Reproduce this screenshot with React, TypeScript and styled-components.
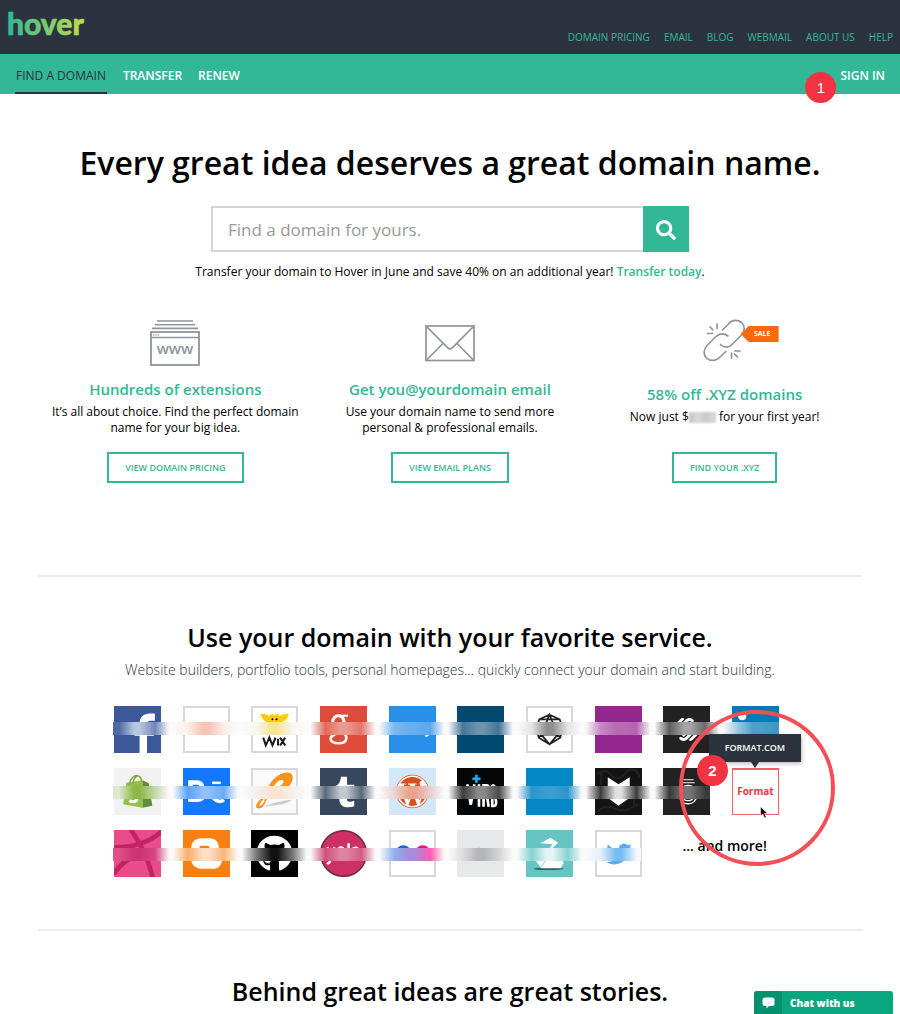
import React from "react";
import styled, { createGlobalStyle } from "styled-components";
import { FaSearch, FaGithub, FaTwitter, FaWordpress } from "react-icons/fa";
import { SiSquarespace } from "react-icons/si";

const green = "#32b896";
const dark = "#2b333e";
const red = "#f13343";
const rule = "#ebeded";

const GlobalStyle = createGlobalStyle`
  * { box-sizing: border-box; }
  body {
    margin: 0;
    background: #fff;
    color: #000;
    font-family: "Open Sans", "Noto Sans", sans-serif;
  }
  a { text-decoration: none; }
  h1, h2, h3, p { margin: 0; }
`;

const TopBar = styled.header`
  display: flex;
  justify-content: space-between;
  align-items: flex-end;
  height: 54px;
  padding: 0 7px 10px;
  background: ${dark};
`;

const Logo = styled.a`
  svg { display: block; overflow: visible; }
  text { font: 900 30px Lato, sans-serif; }
`;

const TopLinks = styled.nav`
  display: flex;
  gap: 14px;
`;

const TopLink = styled.a`
  font-size: 10px;
  line-height: 14px;
  color: ${green};
`;

const MainNav = styled.nav`
  display: flex;
  align-items: stretch;
  gap: 16px;
  height: 40px;
  padding: 0 15px;
  background: ${green};
`;

const NavLink = styled.a<{ $active?: boolean }>`
  position: relative;
  padding: 2px ${(p) => (p.$active ? 1 : 0)}px 0;
  font-size: 12px;
  line-height: 40px;
  font-weight: ${(p) => (p.$active ? 400 : 600)};
  color: ${(p) => (p.$active ? dark : "#fff")};
  box-shadow: ${(p) => (p.$active ? `inset 0 -2px ${dark}` : "none")};
`;

const SignIn = styled(NavLink)`
  margin-left: auto;
`;

const Marker = styled.span<{ $x: number; $y: number; $bold?: boolean }>`
  position: absolute;
  left: ${(p) => p.$x}px;
  top: ${(p) => p.$y}px;
  z-index: 4;
  width: 31px;
  height: 31px;
  border-radius: 50%;
  background: ${red};
  color: #fff;
  font: ${(p) => (p.$bold ? 700 : 400)} 15px/31px "Liberation Sans", sans-serif;
  text-align: center;
`;

const Main = styled.main`
  padding: 0 38px;
`;

const Hero = styled.section`
  display: flex;
  flex-direction: column;
  align-items: center;
  padding-top: 48px;
  text-align: center;
`;

const HeroTitle = styled.h1`
  font-size: 32px;
  line-height: 42px;
  font-weight: 600;
`;

const SearchForm = styled.form`
  display: flex;
  width: 58%;
  margin-top: 22px;
`;

const SearchInput = styled.input`
  flex: 1;
  min-width: 0;
  height: 46px;
  padding: 0 15px;
  border: 2px solid #d4d6d6;
  border-right: 0;
  border-radius: 0;
  outline: 0;
  background: #fff;
  font: 400 17px "Open Sans", sans-serif;
  &::placeholder { color: #999; opacity: 1; }
`;

const SearchButton = styled.button`
  display: grid;
  place-items: center;
  width: 46px;
  height: 46px;
  border: 0;
  padding: 2px 0 0;
  background: ${green};
  color: #fff;
  font-size: 20px;
`;

const Promo = styled.p`
  margin-top: 10px;
  font-size: 12px;
  line-height: 20px;
`;

const PromoLink = styled.a`
  color: ${green};
  font-weight: 600;
`;

const Features = styled.section`
  display: grid;
  grid-template-columns: repeat(3, 1fr);
  margin-top: 36px;
  padding-bottom: 92px;
  border-bottom: 2px solid ${rule};
`;

const Feature = styled.article`
  display: flex;
  flex-direction: column;
  align-items: center;
  height: 165px;
  text-align: center;
`;

const FeatureIcon = styled.div<{ $tall?: boolean }>`
  position: relative;
  width: 50px;
  height: ${(p) => (p.$tall ? 66 : 61)}px;
  padding-top: 2px;
  svg { display: block; }
`;

const FeatureTitle = styled.h3`
  font-size: 15px;
  line-height: 20px;
  font-weight: 600;
  color: ${green};
`;

const FeatureText = styled.p`
  margin-top: 5px;
  font-size: 12px;
  line-height: 16px;
`;

const Hidden = styled.span`
  display: inline-block;
  width: 27px;
  height: 11px;
  vertical-align: -2px;
  background: linear-gradient(90deg, #c4c4c4, #d9d9d9 30%, #cacaca 60%, #d9d9d9);
  filter: blur(1px);
`;

const OutlineButton = styled.button`
  margin-top: auto;
  height: 31px;
  padding: 0 16px;
  border: 2px solid ${green};
  background: #fff;
  color: ${green};
  font: 600 9px "Open Sans", sans-serif;
`;

const SaleTag = styled.span`
  position: absolute;
  left: 41px;
  top: 8px;
  width: 38px;
  height: 16px;
  padding-left: 5px;
  background: #f9690e;
  clip-path: polygon(0 50%, 8px 0, 100% 0, 100% 100%, 8px 100%);
  color: #fff;
  font-size: 7px;
  line-height: 16px;
  font-weight: 700;
`;

const Services = styled.section`
  padding: 43px 0 52px;
  border-bottom: 2px solid ${rule};
  text-align: center;
`;

const SectionTitle = styled.h2`
  font-size: 25px;
  line-height: 34px;
  font-weight: 600;
  text-align: center;
`;

const Subtitle = styled.p`
  margin-top: 6px;
  font-size: 14px;
  line-height: 20px;
  font-weight: 300;
  color: ${dark};
`;

const ServiceRows = styled.div`
  display: flex;
  flex-direction: column;
  gap: 15px;
  max-width: 672px;
  margin: 26px auto 0;
  padding-right: 7px;
`;

const ServiceRow = styled.div`
  position: relative;
  display: grid;
  grid-template-columns: repeat(10, 47px);
  justify-content: space-between;
`;

const SmudgeBar = styled.div<{ $top: number; $right: number; $stops: string }>`
  position: absolute;
  left: -1px;
  right: ${(p) => p.$right}px;
  top: ${(p) => p.$top}px;
  height: 13px;
  background: linear-gradient(90deg, ${(p) => p.$stops});
`;

const Tile = styled.a<{ $bg?: string; $line?: string }>`
  display: block;
  height: 47px;
  background: ${(p) => p.$bg ?? "#fff"};
  border: ${(p) => (p.$line ? `2px solid ${p.$line}` : "0")};
  overflow: hidden;
  > svg { display: block; width: 47px; height: 47px; margin: ${(p) => (p.$line ? "-2px" : "0")}; }
`;

const FormatCell = styled.div`
  position: relative;
  z-index: 3;
`;

const FormatTile = styled.a`
  display: block;
  height: 47px;
  border: 1px solid #f4606a;
  border-top-width: 2px;
  background: #fff;
  color: ${red};
  font: 700 10px/42px "Open Sans", sans-serif;
`;

const Tooltip = styled.span`
  position: absolute;
  left: -23px;
  top: -34px;
  width: 92px;
  background: ${dark};
  box-shadow: 1px 2px 4px rgba(0, 0, 0, 0.25);
  color: #fff;
  font-size: 9px;
  font-weight: 600;
  line-height: 28px;
  &::after {
    content: "";
    position: absolute;
    left: 42px;
    top: 28px;
    border: 4px solid transparent;
    border-top: 6px solid ${dark};
    border-bottom: 0;
  }
`;

const Ring = styled.span`
  position: absolute;
  left: -53px;
  top: -58px;
  z-index: 3;
  width: 156px;
  height: 156px;
  border: 4px solid #f44f56;
  border-radius: 50%;
  pointer-events: none;
`;

const Pointer = styled.svg`
  position: absolute;
  left: 28px;
  top: 38px;
  z-index: 3;
`;

const AndMore = styled.a`
  grid-column: 9 / 11;
  padding: 6px 0 0 7px;
  font-size: 14px;
  line-height: 20px;
  font-weight: 600;
  color: #000;
`;

const Stories = styled.section`
  padding: 43px 0 8px;
`;

const Chat = styled.button`
  position: fixed;
  right: 7px;
  bottom: 0;
  display: flex;
  align-items: center;
  width: 139px;
  height: 23px;
  padding: 0;
  border: 0;
  border-radius: 3px 3px 0 0;
  overflow: hidden;
  background: #0aa680;
  color: #fff;
  font: 800 10px "Open Sans", sans-serif;
`;

const ChatIcon = styled.span`
  display: grid;
  place-items: center;
  width: 28px;
  height: 23px;
  margin-right: 8px;
  background: #04926e;
`;

const grey = "#8f9499";

function BrowserIcon() {
  return (
    <svg width="50" height="46" viewBox="0 0 50 46" fill="none" stroke={grey}>
      <path d="M7 1H43M5 4.7H45M2 8.4H48" strokeWidth="1.6" />
      <rect x="1" y="12" width="48" height="33" strokeWidth="1.8" />
      <path d="M1 17.5H49" strokeWidth="1.4" />
      <path d="M3 14.8H9" strokeDasharray="1.3 1" strokeWidth="1.2" />
      <text x="25" y="34" textAnchor="middle" fill={grey} stroke="none" fontSize="15" fontWeight="600">
        www
      </text>
    </svg>
  );
}

function MailIcon() {
  return (
    <svg width="50" height="42" viewBox="0 0 50 42" fill="none" stroke={grey} strokeWidth="1.7">
      <rect x="1" y="6" width="48" height="34.500" />
      <path d="M1.500 6.500L23 28q2 1.600 4 0L48.500 6.500M1.500 40L18 23.500M48.500 40L32 23.500" />
    </svg>
  );
}

function ChainIcon() {
  return (
    <svg width="50" height="44" viewBox="0 0 50 44" fill="none" stroke={grey} strokeWidth="1.700" strokeLinecap="round" overflow="visible">
      <path d="M22.500 10L29 3.500C32-.5 38-.5 41.500 2.500C45 6 45 11 42 14.500L32.500 24C29 28 24 28 20.500 24.500" />
      <path d="M28 16C24.500 13 19.500 13 16 16.500L7 25.500C3 29.500 3.500 35 6.500 38C10 41.500 16 41 19 38L26 31.500" />
      <path d="M7.500 13.500H12.500M10 7L13 10M17 4V8.500M31.500 33V38M34.500 34L37.500 37M35 31H40" />
    </svg>
  );
}

function FacebookArt() {
  return (
    <svg viewBox="0 0 46 46">
      <path fill="#fff" d="M25 46V29h-5v-8h5v-4c0-6 4-9.700 10-9.700h5v7.200h-4c-3 0-3.700 1.200-3.700 4V21H40l-1 8h-6.700v17z" />
    </svg>
  );
}

function WixArt() {
  return (
    <svg viewBox="0 0 46 46">
      <path
        fill="#fc0"
        d="M9 7.500c4 .2 7 .5 9 2.500 1.500-2.500 3-3 5-.5 2.500-2.500 4-2 5 .5 2-2 5-2.300 9-2.500-1 5-4 7-7 8.500l2 8H14l2-7.500C13 14 10 12 9 7.500z"
      />
      <circle cx="21" cy="13" r="1" />
      <circle cx="25" cy="13" r="1" />
      <path fill="none" stroke="#1a1a1a" strokeWidth="2" d="M12 31l2.500 7.500L18 31l3 7.500L24 31M26.500 32v6.700M28.500 31l5 7.700M33.500 31l-5 7.700" />
    </svg>
  );
}

function GoogleArt() {
  return (
    <svg viewBox="0 0 46 46" fill="none" stroke="#fff">
      <ellipse cx="18" cy="15.500" rx="5.500" ry="6" strokeWidth="3" />
      <path d="M18 9.500h9.500" strokeWidth="2" />
      <path d="M20 25c8 3 8 11.500-2 11.500-9 0-10-7-3-8.500" strokeWidth="2.600" />
    </svg>
  );
}

function WeeblyArt() {
  return (
    <svg viewBox="0 0 46 46" fill="none" stroke="#fff" strokeWidth="2">
      <path d="M38.500 26c0 2.500-1 3.500-3 3" />
    </svg>
  );
}

function GlobeArt() {
  return (
    <svg viewBox="0 0 46 46" fill="none" stroke="#222" strokeWidth="1.700">
      <path d="M23 8.500l10 4.500 3 9-2.500 9L23 37.500 12.500 31 10 22l3-9zM23 8.500L15 28h16zM13 13l20 0M10 22l5 6 8 9.500L31 28l5-6M12.500 31l2.500-3M33.500 31L31 28" />
    </svg>
  );
}

function LinkedInArt() {
  return (
    <svg viewBox="0 0 46 46" fill="#fff">
      <circle cx="10" cy="10" r="4" />
      <path d="M7 18h6v10H7z" />
    </svg>
  );
}

function ShopifyArt() {
  return (
    <svg viewBox="0 0 46 46">
      <path fill="#95bf47" d="M12 14.500l16-2.500v27L9 35.500z" />
      <path fill="#5e8e3e" d="M28 12l6 3 3.500 22L28 39z" />
      <path fill="none" stroke="#7fab3c" strokeWidth="1.500" d="M15 16c1-6 5-9 8-8.500s4 3 4 6M19 15c0-4 2-7 4-7" />
      <path fill="none" stroke="#fff" strokeWidth="3" d="M22 29c1 4-3 5-7 3" />
    </svg>
  );
}

function BehanceArt() {
  return (
    <svg viewBox="0 0 46 46" fill="none" stroke="#fff" strokeWidth="4.500">
      <path d="M7.300 12v21M7 14.200h7c6 0 6 8 0 8H9M14 22.500c8 0 8 8.500 0 8.500H7" />
      <path d="M40 31c-4 4-12 0-11-6s11-6 11 1H29" strokeWidth="3.500" />
      <path d="M28.500 14.500h8.500" strokeWidth="2.500" />
    </svg>
  );
}

function AdobeArt() {
  return (
    <svg viewBox="0 0 46 46">
      <path d="M10 38c10-3 18-6 30-7-4 4-12 5-20 6z" fill="#ccc" />
      <path
        fill="#f7941e"
        d="M5 38c0-5 6-8 9-13C18 13 27 4 36 4.500c6 .5 6 6 3 11-5 8-14 10-22 10-2 6-4 15-10 14-1.500 0-2-1-2-1.500z"
      />
      <path fill="#fff" d="M21 21c3-7 7-10 10-9 2 1 0 4-3 6-2 2-4 3-7 3zM8 37c1-4 4-6 6-8-1 4-3 8-6 8z" />
    </svg>
  );
}

function TumblrArt() {
  return (
    <svg viewBox="0 0 46 46">
      <path fill="#fff" d="M20.500 8.500h6v8h7v7h-7v7c0 3 3 3 7 1.500v5.500c-7 2.500-14.500.5-14.500-6.500v-7.500h-4v-6c3.500-1 5-4.500 5.500-9z" />
    </svg>
  );
}

function VirbArt() {
  return (
    <svg viewBox="0 0 46 46" fill="none" stroke="#fff" strokeWidth="2.600">
      <path d="M19 6.500v8M15 10.500h8" stroke="#0ab4f0" />
      <path d="M10 16l3.500 20L17 16M21.500 16v22M26 38V17h3c4 0 3 8-1 8M29 25l2 13M34.500 17v20h2c3 0 2-9-1-10 3-1 3-10-1-10" />
    </svg>
  );
}

function HeartArt() {
  return (
    <svg viewBox="0 0 46 46">
      <path d="M2 6q8-6 14 1t14-2 14 4M3 42q8-7 17-2t22-5M6 5v12M38 18v18" fill="none" stroke="#222" strokeWidth="2" />
      <path fill="#fff" d="M12.500 9L23 16l11-7v20L23 37l-10.500-8z" />
    </svg>
  );
}

function LinesArt() {
  return (
    <svg viewBox="0 0 46 46" fill="none" stroke="#fff">
      <path d="M20 11.500h10M19 14.500h12" strokeWidth="1" />
      <rect x="16" y="17" width="17" height="18" rx="8" strokeWidth="1.300" />
      <rect x="19" y="20" width="11" height="12" rx="5" strokeWidth="1.300" />
    </svg>
  );
}

function DribbbleArt() {
  return (
    <svg viewBox="0 0 46 46" fill="none" stroke="#c32361" strokeWidth="4.500">
      <path d="M0 17c18 0 34-4 47-16M16-1c10 14 18 30 22 48M0 43c10-16 26-22 47-16" />
    </svg>
  );
}

function BloggerArt() {
  return (
    <svg viewBox="0 0 46 46">
      <path fill="#fff" d="M18 8h8c6 0 9 4 9 9 0 3 3 2 3 5v7c0 6-4 9-9 9H18c-6 0-10-4-10-10V18c0-6 4-10 10-10z" />
      <path d="M18 17.500h6" stroke="#f98010" strokeWidth="4" strokeLinecap="round" />
    </svg>
  );
}

function YelpArt() {
  return (
    <svg viewBox="0 0 46 46" fill="none" stroke="#fff" strokeWidth="2.500">
      <circle cx="23" cy="23" r="22.300" fill="#cd3063" stroke="#6b2e42" strokeWidth="1.500" />
      <path d="M7 17l4 8M14 17l-4 13c-1 3-2 3-3 2M18 21h5c0-5-5-5-5 0M28 13v13M33 17v8M33 18c6-3 6 8 0 7" />
    </svg>
  );
}

function FlickrArt() {
  return (
    <svg viewBox="0 0 46 46">
      <circle cx="14" cy="22.500" r="7.500" fill="#1668d8" />
      <circle cx="33" cy="22.500" r="7.500" fill="#ff0b86" />
    </svg>
  );
}

function AboutArt() {
  return (
    <svg viewBox="0 0 46 46">
      <path d="M22 17.500v6" fill="none" stroke="#777" strokeWidth="2" />
    </svg>
  );
}

function SwanArt() {
  return (
    <svg viewBox="0 0 46 46">
      <ellipse cx="22" cy="38" rx="15" ry="1.200" fill="#27636a" />
      <path fill="#fff" d="M14 13l10-5.500 7.500 5L21 22l11 3 5 7-3 5.500H15L8 28l11-5 7-9z" />
      <path d="M14 37l10-13" stroke="#9bdad8" />
    </svg>
  );
}

type Service = { name: string; bg?: string; line?: string; art?: React.ReactNode; smear: string[] };

const line = "#d8d8d8";

const rowOne: Service[] = [
  { name: "Facebook", bg: "#3b5998", art: <FacebookArt />, smear: ["#4b69a2", "#b9c6df", "#6f87b8"] },
  { name: "Portfolio", line, smear: ["#fbeee9", "#f6c5b5", "#fbeee9"] },
  { name: "Wix", line, art: <WixArt />, smear: ["#f8f6ee", "#f7e596", "#f8f6ee"] },
  { name: "Google", bg: "#dd4b39", art: <GoogleArt />, smear: ["#e2695b", "#eb9a90", "#e57468"] },
  { name: "Weebly", bg: "#2990ea", art: <WeeblyArt />, smear: ["#7ab7f0", "#6aaeee", "#5ba7ee"] },
  { name: "Me", bg: "#034a73", smear: ["#447597", "#6d93ad", "#447597"] },
  { name: "Globe", line, art: <GlobeArt />, smear: ["#e4e4e4", "#8f8f8f", "#e4e4e4"] },
  { name: "Pages", bg: "#93278f", smear: ["#c58ac4", "#b56cb3", "#b465b2"] },
  {
    name: "Squarespace",
    bg: "#222",
    art: (
      <svg viewBox="0 0 46 46">
        <SiSquarespace x="9" y="9" size={28} color="#fff" />
      </svg>
    ),
    smear: ["#5d5d5d", "#a5a5a5", "#6a6a6a"],
  },
  { name: "LinkedIn", bg: "#007bb6", art: <LinkedInArt />, smear: ["#9cc7de", "#4f9fca", "#3f97c6"] },
];

const rowTwo: Service[] = [
  { name: "Shopify", bg: "#f2f2f2", art: <ShopifyArt />, smear: ["#dfe8cf", "#8bb848", "#c4d8a6"] },
  { name: "Behance", bg: "#1378fe", art: <BehanceArt />, smear: ["#5ba0ff", "#8fc0ff", "#6aabff"] },
  { name: "Photo", bg: "#fafafa", line, art: <AdobeArt />, smear: ["#f4f0ee", "#fbe3cf", "#f5f0ea"] },
  { name: "Tumblr", bg: "#36465d", art: <TumblrArt />, smear: ["#5c697b", "#c4c9d0", "#5b687a"] },
  {
    name: "WordPress",
    bg: "#d3e7f8",
    art: (
      <svg viewBox="0 0 46 46">
        <circle cx="23" cy="23" r="16.500" fill="#fff" />
        <FaWordpress x="6" y="6" size={34} color="#d9501e" />
      </svg>
    ),
    smear: ["#e8d5d3", "#e9a48c", "#e4cfcf"],
  },
  { name: "Virb", bg: "#050607", art: <VirbArt />, smear: ["#3c3c3c", "#8a8a8a", "#4b4b4b"] },
  { name: "Blue", bg: "#0487c5", smear: ["#2c95cd", "#3a9ed0", "#2c95cd"] },
  { name: "Cartel", bg: "#141414", art: <HeartArt />, smear: ["#3b3b3b", "#e0e0e0", "#3d3d3d"] },
  { name: "Lines", bg: "#222", art: <LinesArt />, smear: ["#3a3a3a", "#757575", "#3a3a3a"] },
];

const rowThree: Service[] = [
  { name: "Dribbble", bg: "#ea4c89", art: <DribbbleArt />, smear: ["#e0508b", "#cd3371", "#d84583"] },
  { name: "Blogger", bg: "#f98010", art: <BloggerArt />, smear: ["#fbaf69", "#fddfc6", "#fbb678"] },
  {
    name: "GitHub",
    bg: "#000",
    art: (
      <svg viewBox="0 0 46 46">
        <FaGithub x="5" y="5" size={36} color="#fff" />
      </svg>
    ),
    smear: ["#777", "#111", "#777"],
  },
  { name: "Yelp", art: <YelpArt />, smear: ["#d0517b", "#dd84a2", "#d35c83"] },
  { name: "Flickr", line, art: <FlickrArt />, smear: ["#8fb1ea", "#a98bd8", "#ff5ab0"] },
  { name: "About", bg: "#e7e8ea", art: <AboutArt />, smear: ["#dcdcdd", "#b5b6b8", "#d5d5d6"] },
  { name: "Swan", bg: "#66c5c3", art: <SwanArt />, smear: ["#86d2d0", "#e5f5f5", "#86d2d0"] },
  {
    name: "Twitter",
    line,
    art: (
      <svg viewBox="0 0 46 46">
        <FaTwitter x="11" y="11" size={25} color="#55acee" />
      </svg>
    ),
    smear: ["#e2f0fb", "#78bdf0", "#f4f9fd"],
  },
];

const rowWidth = 665;
const tilePitch = (rowWidth - 47) / 9;

function Smudge({ items, top, right = 0 }: { items: Service[]; top: number; right?: number }) {
  const width = rowWidth - right;
  const at = (x: number) => `${((x / width) * 100).toFixed(2)}%`;
  const stops = items
    .flatMap((s, i) => {
      const x = i * tilePitch;
      const gap = i < items.length - 1 ? [`#fafafa ${at(x + 56)}`, `#fafafa ${at(x + 60)}`] : [];
      return [
        `${s.smear[0]} ${at(x + 6)}`,
        `${s.smear[1]} ${at(x + 21)}`,
        `${s.smear[1]} ${at(x + 27)}`,
        `${s.smear[2]} ${at(x + 42)}`,
        ...gap,
      ];
    })
    .join(", ");
  return <SmudgeBar $top={top} $right={right} $stops={stops} />;
}

function Tiles({ items }: { items: Service[] }) {
  return (
    <>
      {items.map((s) => (
        <Tile key={s.name} href="#" aria-label={s.name} $bg={s.bg} $line={s.line}>
          {s.art}
        </Tile>
      ))}
    </>
  );
}

const topLinks = ["DOMAIN PRICING", "EMAIL", "BLOG", "WEBMAIL", "ABOUT US", "HELP"];

export default function App() {
  return (
    <>
      <GlobalStyle />
      <TopBar>
        <Logo href="#">
          <svg width="80" height="34" viewBox="0 0 80 34">
            <defs>
              <linearGradient id="logoFill" x1="0" x2="78" y1="0" y2="0" gradientUnits="userSpaceOnUse">
                <stop offset="0" stopColor="#32b896" />
                <stop offset="0.55" stopColor="#84cb6c" />
                <stop offset="1" stopColor="#c3dd45" />
              </linearGradient>
            </defs>
            <text x="0" y="25" fill="url(#logoFill)" stroke="url(#logoFill)" strokeWidth="0.600">hover</text>
          </svg>
        </Logo>
        <TopLinks>
          {topLinks.map((t) => (
            <TopLink href="#" key={t}>{t}</TopLink>
          ))}
        </TopLinks>
      </TopBar>
      <MainNav>
        <NavLink href="#" $active>FIND A DOMAIN</NavLink>
        <NavLink href="#">TRANSFER</NavLink>
        <NavLink href="#">RENEW</NavLink>
        <SignIn href="#">
          SIGN IN
          <Marker $x={-35} $y={18}>1</Marker>
        </SignIn>
      </MainNav>
      <Main>
        <Hero>
          <HeroTitle>Every great idea deserves a great domain name.</HeroTitle>
          <SearchForm onSubmit={(e) => e.preventDefault()}>
            <SearchInput type="text" aria-label="Find a domain" placeholder="Find a domain for yours." />
            <SearchButton type="submit" aria-label="Search">
              <FaSearch />
            </SearchButton>
          </SearchForm>
          <Promo>
            Transfer your domain to Hover in June and save 40% on an additional year!{" "}
            <PromoLink href="#">Transfer today</PromoLink>.
          </Promo>
        </Hero>
        <Features>
          <Feature>
            <FeatureIcon><BrowserIcon /></FeatureIcon>
            <FeatureTitle>Hundreds of extensions</FeatureTitle>
            <FeatureText>
              It’s all about choice. Find the perfect domain
              <br />
              name for your big idea.
            </FeatureText>
            <OutlineButton>VIEW DOMAIN PRICING</OutlineButton>
          </Feature>
          <Feature>
            <FeatureIcon><MailIcon /></FeatureIcon>
            <FeatureTitle>Get you@yourdomain email</FeatureTitle>
            <FeatureText>
              Use your domain name to send more
              <br />
              personal &amp; professional emails.
            </FeatureText>
            <OutlineButton>VIEW EMAIL PLANS</OutlineButton>
          </Feature>
          <Feature>
            <FeatureIcon $tall>
              <ChainIcon />
              <SaleTag>SALE</SaleTag>
            </FeatureIcon>
            <FeatureTitle>58% off .XYZ domains</FeatureTitle>
            <FeatureText>
              Now just $<Hidden /> for your first year!
            </FeatureText>
            <OutlineButton>FIND YOUR .XYZ</OutlineButton>
          </Feature>
        </Features>
        <Services>
          <SectionTitle>Use your domain with your favorite service.</SectionTitle>
          <Subtitle>
            Website builders, portfolio tools, personal homepages... quickly connect your domain and start building.
          </Subtitle>
          <ServiceRows>
            <ServiceRow>
              <Tiles items={rowOne} />
              <Smudge items={rowOne} top={16} />
            </ServiceRow>
            <ServiceRow>
              <Tiles items={rowTwo} />
              <Smudge items={rowTwo} top={18} right={69} />
              <FormatCell>
                <FormatTile href="#">Format</FormatTile>
                <Tooltip>FORMAT.COM</Tooltip>
                <Ring />
                <Marker $x={-35} $y={-13} $bold>2</Marker>
                <Pointer width="8" height="13" viewBox="0 0 8 13">
                  <path d="M.5.5v9.500l2.300-2 1.700 4 1.800-.8L4.600 7.400h3z" fill="#111" stroke="#fff" strokeWidth="0.600" />
                </Pointer>
              </FormatCell>
            </ServiceRow>
            <ServiceRow>
              <Tiles items={rowThree} />
              <AndMore href="#">... and more!</AndMore>
              <Smudge items={rowThree} top={18} right={138} />
            </ServiceRow>
          </ServiceRows>
        </Services>
        <Stories>
          <SectionTitle>Behind great ideas are great stories.</SectionTitle>
        </Stories>
      </Main>
      <Chat>
        <ChatIcon>
          <svg width="13" height="12" viewBox="0 0 13 12" fill="#fff">
            <path d="M3 .5h7a2.500 2.500 0 0 1 2.500 2.500v3.500A2.500 2.500 0 0 1 10 9H7L4.500 11.500V9H3A2.500 2.500 0 0 1 .5 6.500V3A2.500 2.500 0 0 1 3 .5z" />
          </svg>
        </ChatIcon>
        Chat with us
      </Chat>
    </>
  );
}
